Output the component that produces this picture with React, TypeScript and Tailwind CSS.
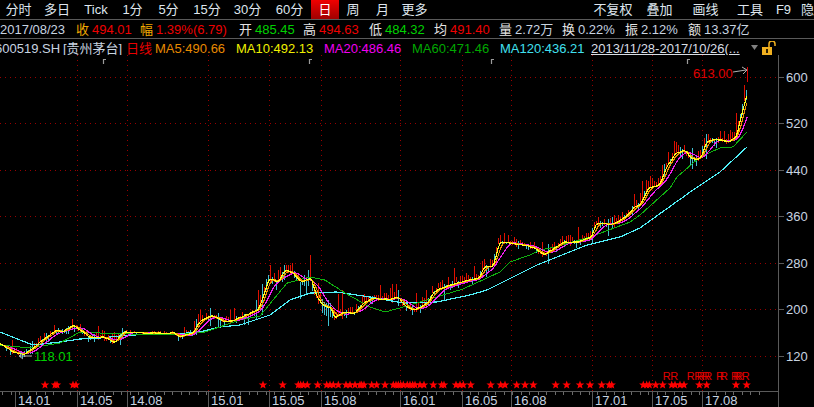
import React from "react";

type P = [number, number];
const FONT = "font-['Liberation_Sans','Noto_Sans_CJK_SC',sans-serif]";

const pricePath: P[] = [
  [0,345],[13,352],[23,355],[33,347],[42,340],[55,330],[60,332],[72,325],[83,333],[90,338],[103,337],[113,343],[123,332],[147,333],[173,333],[177,337],[192,333],[197,323],[210,315],[223,322],[233,320],[257,310],[263,293],[268,278],[277,282],[283,270],[292,273],[300,282],[310,278],[315,297],[322,305],[330,308],[333,318],[343,312],[353,313],[363,303],[370,298],[387,300],[397,297],[403,305],[413,310],[427,303],[432,292],[443,287],[453,284],[467,280],[477,279],[483,267],[492,266],[498,243],[503,242],[520,245],[533,248],[543,255],[553,248],[563,242],[577,242],[590,237],[595,223],[613,224],[623,218],[633,208],[640,203],[647,188],[658,185],[665,167],[675,153],[683,150],[692,160],[700,158],[705,142],[713,139],[727,142],[735,137],[740,115],[745,97],[747,92],
];
const ma60: P[] = [
  [0,345],[30,348],[60,343],[80,332],[100,333],[130,334],[175,335],[205,332],[240,320],[260,316],[287,283],[310,277],[325,280],[345,293],[370,307],[385,312],[400,308],[420,302],[463,289],[500,272],[510,262],[530,255],[540,250],[555,247],[590,237],[630,222],[640,215],[670,188],[677,177],[700,157],[720,148],[733,147],[747,132],
];
const ma120: P[] = [
  [0,332],[20,340],[33,345],[60,342],[80,339],[100,338],[130,335],[175,334],[200,332],[220,327],[240,325],[270,315],[290,300],[310,293],[337,292],[370,297],[403,303],[437,302],[470,295],[487,290],[513,277],[537,265],[587,245],[620,237],[640,228],[665,210],[693,190],[720,172],[747,147],
];

const at = (path: P[], x: number) => {
  for (let i = 1; i < path.length; i++) {
    if (x <= path[i][0]) {
      const [x0, y0] = path[i - 1];
      const [x1, y1] = path[i];
      return y0 + ((y1 - y0) * (x - x0)) / (x1 - x0);
    }
  }
  return path[path.length - 1][1];
};

let seed = 77;
const rnd = () => {
  seed = (seed * 16807) % 2147483647;
  return seed / 2147483647;
};
const xs = Array.from({ length: 748 }, (_, i) => i);
const noisy = xs.map((x) => at(pricePath, x) + (rnd() - 0.5) * 2.2);
const trailing = (w: number) =>
  xs.filter((x) => x % 2 === 0 || x === 747).map((x) => {
    const s = noisy.slice(Math.max(0, x - w + 1), x + 1);
    return [x, s.reduce((a, b) => a + b, 0) / s.length] as P;
  });
const pts = (p: P[]) => p.map(([x, y]) => `${x},${y.toFixed(1)}`).join(" ");
const line = (p: P[]) => xs.filter((x) => x % 2 === 0 || x === 747).map((x) => [x, at(p, x)] as P);

const ampAt = (x: number) => {
  if (x < 125) return 6;
  if (x < 178) return 2;
  if (x < 255) return 6;
  if (x < 345) return 11;
  if (x < 640) return 7;
  return 10;
};
const bars = xs
  .filter((x) => x > 2 && x % 2 === 0)
  .map((x) => {
    const spike = rnd() > 0.75 ? 1.9 : 0.9;
    const a = ampAt(x) * spike;
    const base = noisy[x];
    const up = rnd() > 0.35;
    return {
      x,
      y1: base - a * (up ? 0.3 + rnd() * 0.9 : rnd() * 0.6),
      y2: base + a * (up ? rnd() * 0.3 : 0.2 + rnd() * 0.8),
      up,
    };
  });

const gridY = [77, 123, 170, 216, 263, 309, 356];
const gridX = [77, 127, 208, 269, 321, 400, 462, 511, 592, 652, 702];
const stars = [
  45,55,57,73,76,263,
  ...[38,85,92,100,112,143,170,180,190,205,228,240,255,270,275,282,305,320,345,370,378,385,392,400,412,420,428,435,450,462,490,515,522,558,570,580,602,662,692,705,740,765,790].map((v) => 270 + v / 3),
  ...[47,80,120,150,185,208,215,310,320,328,347,368,395,405,420,432,478,500,588,620].map((v) => 540 + v / 3),
];
const rs = [380,403,452,475,482,497,505,540,552,585,592,598,617].map((v) => 540 + v / 3);
const flags = [103, 309, 491, 687];

const starPoints = (cx: number, cy: number, r: number) =>
  Array.from({ length: 10 }, (_, i) => {
    const rr = i % 2 ? r * 0.42 : r;
    const t = -Math.PI / 2 + (i * Math.PI) / 5;
    return `${(cx + rr * Math.cos(t)).toFixed(1)},${(cy + rr * Math.sin(t)).toFixed(1)}`;
  }).join(" ");

const menuLeft: [string, string][] = [
  ["分时", "w-[37px]"],["多日", "w-[40px]"],["Tick", "w-[38px]"],["1分", "w-[35px]"],["5分", "w-[37px]"],["15分", "w-[40px]"],["30分", "w-[41px]"],["60分", "w-[43px]"],
];
const menuAfter: [string, string][] = [["周", "w-[28px]"],["月", "w-[31px]"],["更多", "w-[33px]"]];
const menuRight: [string, string][] = [["不复权", "w-[46px]"],["叠加", "w-[47px]"],["画线", "w-[45px]"],["工具", "w-[44px]"],["F9", "w-[23px]"]];

function Quote({ label, value, w, labelC, valueC }: { label: string; value: string; w: string; labelC: string; valueC: string }) {
  return (
    <div className={`flex gap-[3px] ${w}`}>
      <span className={labelC}>{label}</span>
      <span className={valueC}>{value}</span>
    </div>
  );
}

const xLabels: [string, string][] = [
  ["14.01","w-[62px]"],["14.05","w-[50px]"],["14.08","w-[81px]"],["15.01","w-[61px]"],["15.05","w-[52px]"],["15.08","w-[79px]"],["16.01","w-[62px]"],["16.05","w-[49px]"],["16.08","w-[81px]"],["17.01","w-[60px]"],["17.05","w-[50px]"],["17.08","w-[77px]"],
];

export default function App() {
  return (
    <div className={`w-[814px] h-[407px] bg-black overflow-hidden flex flex-col text-[13px] leading-none whitespace-nowrap ${FONT}`}>
      <div className="h-[20px] shrink-0 flex items-stretch border-b border-[#5a5a5a] text-[#dfe6ee]">
        {menuLeft.map(([t, w]) => (
          <div key={t} className={`${w} flex items-center justify-center`}>{t}</div>
        ))}
        <div className="w-[28px] flex items-center justify-center text-white bg-gradient-to-b from-[#f00000] to-[#a00000]">日</div>
        {menuAfter.map(([t, w]) => (
          <div key={t} className={`${w} flex items-center justify-center`}>{t}</div>
        ))}
        <div className="flex-1" />
        {menuRight.map(([t, w]) => (
          <div key={t} className={`${w} flex items-center justify-center`}>{t}</div>
        ))}
        <div className="w-[19px] pl-[6px] flex items-center">隐</div>
      </div>

      <div className="h-[19px] shrink-0 flex items-center pt-[1px] border-b border-[#5a5a5a] text-[#c8d4e0]">
        <div className="w-[76px]">2017/08/23</div>
        <Quote label="收" value="494.01" w="w-[64px]" labelC="text-[#f0a800]" valueC="text-[#ee0000]" />
        <Quote label="幅" value="1.39%(6.79)" w="w-[99px]" labelC="text-[#f0a800]" valueC="text-[#ee0000]" />
        <Quote label="开" value="485.45" w="w-[64px]" labelC="text-[#e4e4e4]" valueC="text-[#00d000]" />
        <Quote label="高" value="494.63" w="w-[66px]" labelC="text-[#e4e4e4]" valueC="text-[#ee0000]" />
        <Quote label="低" value="484.32" w="w-[65px]" labelC="text-[#e4e4e4]" valueC="text-[#00d000]" />
        <Quote label="均" value="491.40" w="w-[65px]" labelC="text-[#e4e4e4]" valueC="text-[#ee0000]" />
        <Quote label="量" value="2.72万" w="w-[63px]" labelC="text-[#e4e4e4]" valueC="text-[#c8d4e0]" />
        <Quote label="换" value="0.22%" w="w-[63px]" labelC="text-[#e4e4e4]" valueC="text-[#c8d4e0]" />
        <Quote label="振" value="2.12%" w="w-[63px]" labelC="text-[#e4e4e4]" valueC="text-[#c8d4e0]" />
        <Quote label="额" value="13.37亿" w="w-[62px]" labelC="text-[#e4e4e4]" valueC="text-[#c8d4e0]" />
      </div>

      <div className="h-[16px] shrink-0 flex items-center pt-[2px] overflow-hidden">
        <div className="w-[68px] shrink-0 -ml-[5px] text-[#c8d4e0]">600519.SH</div>
        <div className="w-[63px] shrink-0 text-[#c8d4e0]">[贵州茅台]</div>
        <div className="w-[29px] shrink-0 text-[#e80000]">日线</div>
        <div className="w-[81px] shrink-0 text-[#e88a00]">MA5:490.66</div>
        <div className="w-[88px] shrink-0 text-[#f0f000]">MA10:492.13</div>
        <div className="w-[88px] shrink-0 text-[#f000f0]">MA20:486.46</div>
        <div className="w-[88px] shrink-0 text-[#00a800]">MA60:471.46</div>
        <div className="w-[91px] shrink-0 text-[#40e0f0]">MA120:436.21</div>
        <div className="w-[160px] shrink-0 text-[#d8dde4] underline underline-offset-1">2013/11/28-2017/10/26(...</div>
        <svg width="8" height="6" viewBox="0 0 8 6" className="shrink-0 mr-[3px]">
          <polygon points="0,0 7,0 3.5,5" fill="#808080" />
        </svg>
        <svg width="16" height="14" viewBox="0 1 16 14" className="shrink-0">
          <rect x="0" y="7" width="10" height="8" fill="#f0b020" />
          <rect x="4" y="9" width="2" height="4" fill="#302000" />
          <path d="M7 7 V4 A3 3 0 0 1 13 4 V6" fill="none" stroke="#f0b020" strokeWidth="1.5" />
        </svg>
      </div>

      <div className="flex-1 min-h-0 flex">
        <div className="w-[779px] shrink-0 flex flex-col border-r border-[#5a5a5a]">
          <svg className="block w-[778px] h-[336px] shrink-0" viewBox="0 55 778 336">
            <g stroke="#980000" strokeWidth="1" strokeDasharray="1 4" shapeRendering="crispEdges">
              {gridY.map((y) => (
                <line key={y} x1="0" x2="778" y1={y + 0.5} y2={y + 0.5} />
              ))}
              {gridX.map((x) => (
                <line key={x} x1={x + 0.5} x2={x + 0.5} y1="55" y2="391" />
              ))}
            </g>
            <g stroke="#9a9a9a" strokeWidth="1.2" fill="none">
              {flags.map((x) => (
                <path key={x} d={`M${x + 0.5} 64 V59.5 H${x + 3}`} />
              ))}
            </g>
            <g strokeWidth="1.2" shapeRendering="crispEdges">
              {bars.map((b) => (
                <line key={b.x} x1={b.x + 0.5} x2={b.x + 0.5} y1={b.y1} y2={b.y2} stroke={b.up ? "#e01000" : "#40c0d0"} />
              ))}
            </g>
            <g fill="none" shapeRendering="crispEdges">
              <polyline points={pts(line(ma120))} stroke="#50f0f8" strokeWidth="1.2" />
              <polyline points={pts(line(ma60))} stroke="#10b010" strokeWidth="1" />
              <polyline points={pts(trailing(16))} stroke="#f020f0" strokeWidth="1.2" />
              <polyline points={pts(trailing(8))} stroke="#f09000" strokeWidth="1.2" />
              <polyline points={pts(trailing(4))} stroke="#ffff20" strokeWidth="1.2" />
            </g>
            <line x1="747.5" x2="747.5" y1="67" y2="82" stroke="#e00000" />
            <path d="M733 72 L746 70 M742 67 L747 70 L743 74" stroke="#b0b0b0" fill="none" />
            <text x="693" y="78" fontSize="13" fill="#e00000" fontFamily="Liberation Sans">613.00</text>
            <path d="M32 356 H19 M23 353 L19 356 L23 359" stroke="#b0b0b0" fill="none" />
            <text x="34" y="361" fontSize="13" fill="#00d000" fontFamily="Liberation Sans">118.01</text>
            {rs.map((x, i) => (
              <text key={i} x={x - 4} y="380" fontSize="11" fill="#e00000" fontFamily="Liberation Sans">R</text>
            ))}
            {stars.map((x, i) => (
              <polygon key={i} points={starPoints(x, 385, 4.5)} fill="#ff0000" />
            ))}
          </svg>
          <div className="relative flex-1 flex border-t border-[#5a5a5a] text-[#c8d4e0]">
            <svg className="absolute left-0 top-0 w-[778px] h-[4px]" viewBox="0 0 778 4">
              <g stroke="#6a6a6a" shapeRendering="crispEdges">
                {Array.from({ length: 90 }, (_, i) => (
                  <line key={i} x1={2.5 + i * 8.5} x2={2.5 + i * 8.5} y1="0" y2="3" />
                ))}
              </g>
            </svg>
            <div className="w-[15px] shrink-0" />
            {xLabels.map(([t, w]) => (
              <div key={t} className={`${w} shrink-0 border-l border-[#5a5a5a] pl-[2px] flex items-center pt-[2px]`}>{t}</div>
            ))}
          </div>
        </div>
        <div className="flex-1 flex flex-col -mt-[1px] text-[#c8d4e0]">
          {["600", "520", "440", "360", "280", "200", "120"].map((t) => (
            <div key={t} className="h-[46.5px] shrink-0 flex items-center gap-[2px]">
              <div className="w-[5px] h-px bg-[#5a5a5a]" />
              <span>{t}</span>
            </div>
          ))}
        </div>
      </div>
    </div>
  );
}
